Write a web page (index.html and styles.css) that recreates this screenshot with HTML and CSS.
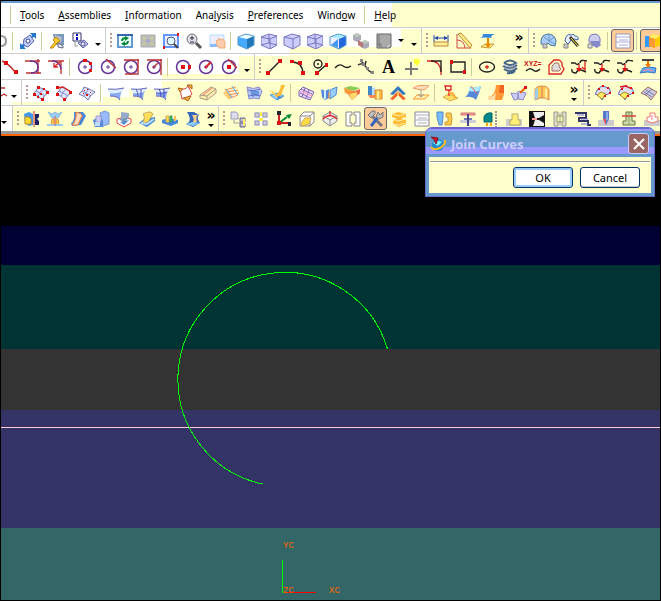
FILE: index.html
```html
<!DOCTYPE html>
<html lang="en">
<head>
<meta charset="utf-8">
<title>Join Curves</title>
<link rel="stylesheet" href="styles.css">
</head>
<body>
<svg class="defs" aria-hidden="true">
  <symbol id="ring" viewBox="0 0 16 16"><circle class="pu" cx="8" cy="8" r="6.500"/><path class="pu thin" d="M6 8h4M8 6v4"/></symbol>
  <symbol id="cube" viewBox="0 0 16 16"><path d="M0 4l8-3 8 2v9l-7 4-9-4z" fill="#ccf" stroke="#77b"/><path class="ln" stroke="#77b" d="M0 4l9 2 7-3M9 6v10M8 1v9M0 12l8-2 8 2"/></symbol>
  <symbol id="patch" viewBox="0 0 16 16"><path d="M0 9q4-3 5-7 4 1 11 5-5 3-7 8-3-4-9-6z" fill="#dde6ff" stroke="#77a"/><path class="ln" stroke="#88c" d="M3 6q5 2 9 5M10 4q-3 3-5 7"/></symbol>
  <symbol id="sheet" viewBox="0 0 16 16"><path d="M0 4q8 1 16-1-4 4-4 12-2-4-10-4 1-4-2-7z" fill="#8ae"/><path d="M0 4q8 1 16-1l-3 4q-5 2-11 1-1-3-2-4z" fill="#def"/><path class="ln" stroke="#66b" d="M0 4q8 1 16-1M2 11q8 0 10 4"/></symbol>
  <symbol id="splice" viewBox="0 0 16 16"><path class="bk" d="M0 4h4q3 3 4 0M16 2q-7-2-7 2M1 10q-1 4 4 4 2-4 5-3t5 2"/><path class="rd" d="M8 5v7"/><path class="dot" d="M5 9h6l-3 4z"/></symbol>
  <symbol id="star" viewBox="0 0 16 16"><path d="M0 9l3-5 4-3 7 2 2 5-6 2-3 5-2-4z" fill="#dde" stroke="#66b"/><path d="M2 10l4-3 5 2-4 5z" fill="#fe6" stroke="#a82"/><path class="dot" d="M7 0h2v2H7zM12 2h2v2h-2zM14 7h2v2h-2zM3 3h2v2H3zM9 10h2v2H9z"/></symbol>
</svg>
<div class="window">
  <header class="chrome">
    <nav class="menu" aria-label="Menu bar">
      <span class="rule"></span>
      <button><u>T</u>ools</button><button><u>A</u>ssemblies</button><button><u>I</u>nformation</button><button>Ana<u>l</u>ysis</button><button><u>P</u>references</button><button>Wind<u>o</u>w</button>
      <span class="rule"></span>
      <button><u>H</u>elp</button>
    </nav>

    <div class="row">
      <div class="bar">
        <button class="part" aria-label="Redo"><svg viewBox="0 0 9 16"><path d="M0 3q5 0 5 5t-5 5" fill="none" stroke="#999" stroke-width="2"/></svg></button>
        <i class="sep"></i>
        <button aria-label="Fit view"><svg viewBox="0 0 16 16"><path d="M4 6l6-4 4 6-6 6-5-2z" fill="#bcf" stroke="#66a"/><circle cx="8" cy="8" r="2" fill="#fff" stroke="#447"/><path d="M10 0h6v6l-2-2-2 1-1-1 1-2zM0 10l2 2 2-1 1 1-1 2 2 2H0z" fill="#27c"/></svg></button>
        <i class="sep"></i>
        <button aria-label="Selection filter"><svg viewBox="0 0 16 16"><path d="M4 1h11v11H6z" fill="#79b"/><path d="M6 2l7 2-1 6-6-2z" fill="#bbc"/><path d="M1 15l5-6-2-2 3-3 4 4-3 2-4 5z" fill="#fc3" stroke="#b80"/><path d="M9 10l5 3v2l-5-1z" fill="#eef" stroke="#668"/></svg></button>
        <button aria-label="Object information"><svg viewBox="0 0 16 16"><path d="M1 0h8v8H1z" fill="#fff" stroke="#336"/><path d="M4 1h2v2H4zM4 4h2v3H4z" fill="#00c"/><path d="M6 10l6-3 4 4-5 4z" fill="#bcf" stroke="#66a"/><circle cx="11" cy="11" r="2" fill="#eef" stroke="#558"/><path d="M3 9v4h3" class="ln" stroke="#999"/></svg></button>
        <button class="more" aria-label="Toolbar options"></button>
      </div>
      <div class="bar">
        <i class="grip"></i>
        <button aria-label="Refresh"><svg viewBox="0 0 16 16"><path d="M1 2h14v12H1z" fill="#eff" stroke="#69c" stroke-width="2"/><path d="M0 2h16" stroke="#36a" stroke-width="2"/><path d="M5 8q0-3 4-3M11 8q0 3-4 3" fill="none" stroke="#083" stroke-width="2"/><path d="M8 3l4 2-4 3zM8 8l-4 3 4 2z" fill="#083"/></svg></button>
        <button aria-label="Fit"><svg viewBox="0 0 16 16"><path d="M1 2h14v12H1z" fill="#bbb" stroke="#aaa"/><path d="M3 4l10 8M13 4L3 12" stroke="#cc9" stroke-width="2"/><path d="M6 6h4v4H6z" fill="#aac"/></svg></button>
        <button aria-label="Zoom to area"><svg viewBox="0 0 16 16"><path d="M1 2h14v12H1z" fill="#eef" stroke="#69f" stroke-width="2"/><circle cx="8" cy="8" r="4" fill="#dff" stroke="#557"/><path d="M11 11l4 4" stroke="#444" stroke-width="2"/><path class="dot" d="M14 0h2v3h-2zM0 13h2v3H0z"/></svg></button>
        <button aria-label="Zoom in and out"><svg viewBox="0 0 16 16"><circle cx="6" cy="6" r="5" fill="#dde" stroke="#777"/><path class="ln" stroke="#333" d="M4 5h4M6 3v4M4 9h4"/><path d="M10 10l5 5" stroke="#555" stroke-width="3"/></svg></button>
        <button aria-label="Pan"><svg viewBox="0 0 16 16"><path d="M1 2h14v11H1z" fill="#eef" stroke="#adf"/><path d="M1 11h9v3H1z" fill="#8bf"/><path d="M8 7h2V5l2 2 2-1 2 3v6h-6l-3-4z" fill="#fca" stroke="#ea7"/></svg></button>
        <i class="sep"></i>
        <button aria-label="Shaded"><svg viewBox="0 0 16 16"><path d="M0 4l8-3 8 2-7 3z" fill="#eff"/><path d="M0 4l9 2v10l-9-4z" fill="#4af"/><path d="M9 6l7-3v9l-7 4z" fill="#27b"/><path d="M0 4l8-3 8 2v9l-7 4-9-4z" class="ln" stroke="#59c"/></svg></button>
        <button aria-label="Wireframe"><svg><use href="#cube"/></svg></button>
        <button aria-label="Hidden edges"><svg viewBox="0 0 16 16"><path d="M0 4l8-3 8 2v9l-7 4-9-4z" fill="#ccf" stroke="#77b"/><path class="ln" stroke="#77b" d="M0 4l9 2 7-3M9 6v10"/></svg></button>
        <button aria-label="Dimmed edges"><svg><use href="#cube"/></svg></button>
        <button aria-label="Face analysis"><svg viewBox="0 0 16 16"><path d="M0 4l8-3 8 2-7 3z" fill="#aef"/><path d="M0 4l9 2v10l-9-4z" fill="#eef"/><path d="M9 6l7-3v9l-7 4z" fill="#26d"/><path d="M1 12l7-6v9z" fill="#49e"/><path d="M0 4l8-3 8 2v9l-7 4-9-4z" class="ln" stroke="#59c"/></svg></button>
        <button aria-label="Studio"><svg viewBox="0 0 16 16"><path d="M0 2l4-2 4 2v5L4 9 0 7zM8 9l4-2 4 2v5l-4 2-4-2z" fill="#aab"/><path d="M0 2l4 2 4-2-4-2zM8 9l4 2 4-2-4-2z" fill="#bcb"/><path d="M5 7l5 3v5l-5-3z" fill="#b77"/></svg></button>
        <button aria-label="Background"><svg viewBox="0 0 16 16"><path d="M1 1h14v13l-2 1H1z" fill="#aaa" stroke="#666"/><path d="M3 2v12M1 11h4v4" class="ln" stroke="#777"/><path d="M11 15q0-3 4-3z" fill="#ddd"/></svg></button>
        <button class="more up" aria-label="Background choices"></button><button class="more" aria-label="View toolbar options"></button>
      </div>
      <div class="bar">
        <i class="grip"></i>
        <button aria-label="Measure distance"><svg viewBox="0 0 16 16"><path d="M1 2v7M15 2v7M3 5h11" class="ln" stroke="#24a"/><path d="M1 5l4-2v4zM15 5l-4-2v4z" fill="#24a"/><path d="M1 9h14v4H1z" fill="#fe9" stroke="#b83"/></svg></button>
        <button aria-label="Measure angle"><svg viewBox="0 0 16 16"><path d="M1 1v14h14M1 7q7 0 8 8" class="ln" stroke="#c44"/><path d="M2 1l3-1 11 12-2 3z" fill="#fe8" stroke="#b83"/></svg></button>
        <button aria-label="Measure body"><svg viewBox="0 0 16 16"><path d="M0 5q4 0 4-4h12q-4 1-4 4-6-1-12 0z" fill="#38d"/><path d="M2 14l4-3h9l-4 4z" fill="#fe9" stroke="#c93"/><path d="M8 5h2v6h2l-3 4-3-4h2z" fill="#e80"/></svg></button>
        <i class="space"></i><button class="over" aria-label="More measure tools">»</button>
      </div>
      <div class="bar">
        <i class="grip"></i>
        <button aria-label="Section body"><svg viewBox="0 0 16 16"><path d="M1 9q0-8 8-8 6 1 7 7l-1 5-5-1-2-2-3 2-4-1z" fill="#acf" stroke="#479"/><path d="M9 2v6M4 4l5 4 5-4M9 8l6 3" class="ln" stroke="#69b"/><path d="M3 11h4v4H3z" fill="#ccc" stroke="#888"/></svg></button>
        <button aria-label="Sketch section"><svg viewBox="0 0 16 16"><path d="M2 8q1-8 6-6 2-2 4 1 4 0 3 4-4-2-7 0-1 2-3 4z" fill="#eef" stroke="#36a"/><path d="M7 4l8 9" stroke="#333" stroke-width="3"/><path d="M8 5l7 8" stroke="#fd3"/><path d="M1 11h4v4H1z" fill="#ccc" stroke="#888"/></svg></button>
        <button aria-label="Section shell"><svg viewBox="0 0 16 16"><path d="M3 9q-1-8 6-8 6 1 5 8l-2 4-4-3z" fill="#cce" stroke="#77b"/><path d="M5 8h8l2 4-4 3-6-3z" fill="#88c"/><path d="M2 11h4v4H2z" fill="#ddd" stroke="#888"/></svg></button>
        <i class="sep"></i>
        <button class="on" aria-label="Dialog list"><svg viewBox="0 0 16 16"><path d="M1 1h14v14H1z" fill="#fff" stroke="#99b"/><path d="M1 4h14M4 7h9M1 9h14M4 12h9" class="ln" stroke="#aad"/></svg></button>
        <i class="sep"></i>
        <button class="on" aria-label="Modeling"><svg viewBox="0 0 16 16"><path d="M1 3h6v11H1z" fill="#39f"/><path d="M5 4l4-3 7 2v9l-6 3-5-2z" fill="#fc0"/><path d="M5 4l6 2 5-3-7-2z" fill="#fe6"/><path d="M5 4l6 2v9l-6-2z" fill="#f93"/></svg></button>
      </div>
    </div>

    <div class="row">
      <div class="bar lead">
        <button aria-label="Line to arc"><svg viewBox="0 0 16 16"><path class="br" d="M0 2q7 3 13 11"/><path class="dot" d="M2 2h4v4H2zM12 11h4v4h-4z"/></svg></button>
        <button aria-label="Corner arc"><svg viewBox="0 0 16 16"><path class="br" d="M0 2h15M13 0v15M1 14h15"/><path class="pu" d="M5 2q8 0 8 6t-7 6"/></svg></button>
        <button aria-label="Trim corner"><svg viewBox="0 0 16 16"><path class="br" d="M0 2h16M13 2v13"/><path class="pu" d="M4 2q8 0 9 8"/><path class="rd" d="M12 3L6 8M6 4v4h4"/></svg></button>
        <i class="sep"></i>
        <button aria-label="Circle by three points"><svg><use href="#ring"/><path class="dot" d="M6 0h4v3H6zM12 3h3v3h-3zM12 10h3v3h-3z"/></svg></button>
        <button aria-label="Circle tangent"><svg><use href="#ring"/><path class="br" d="M6 0l10 9"/></svg></button>
        <button aria-label="Circle tangent to two lines"><svg><use href="#ring"/><path class="br" d="M1 1h15M15 0v16M2 15h12"/></svg></button>
        <button aria-label="Circle radius tangent"><svg><use href="#ring"/><path class="br" d="M1 1h15M15 0v16M7 9l5-5"/></svg></button>
        <i class="sep"></i>
        <button aria-label="Circle centre point"><svg><use href="#ring"/><path class="dot" d="M6 6h4v4H6zM13 6h3v4h-3z"/></svg></button>
        <button aria-label="Circle centre radius"><svg><use href="#ring"/><path class="rd wide" d="M7 9l6-6"/></svg></button>
        <button aria-label="Circle centre tangent"><svg><use href="#ring"/><path class="br" d="M7 0l9 9"/><path class="dot" d="M6 6h4v4H6z"/></svg></button>
        <button class="more" aria-label="Arc toolbar options"></button>
      </div>
      <div class="bar">
        <i class="grip"></i>
        <button aria-label="Line"><svg viewBox="0 0 16 16"><path class="bk" d="M2 14L14 2"/><path class="dot" d="M0 12h4v4H0zM12 0h4v4h-4z"/></svg></button>
        <button aria-label="Arc"><svg viewBox="0 0 16 16"><path class="bk" d="M3 3q10 0 11 11"/><path class="dot" d="M1 1h4v3H1zM9 2h4v4H9zM12 12h4v4h-4z"/></svg></button>
        <button aria-label="Lines and arcs"><svg viewBox="0 0 16 16"><circle class="bk" cx="6" cy="5" r="4"/><path class="bk" d="M5 14l9-8M5 5h2"/><path class="dot" d="M3 12h4v4H3zM13 4h3v4h-3z"/></svg></button>
        <button aria-label="Spline"><svg viewBox="0 0 16 16"><path class="bk" d="M0 9q4-5 8-2t8 0"/></svg></button>
        <button aria-label="Fit spline"><svg viewBox="0 0 16 16"><path class="bk" d="M0 6q5-3 8 2t7 6M3 2l3 3M8 2L7 6"/><path d="M4 4h3v3H4zM8 8h3v3H8zM13 12h3v3h-3zM2 0h3v3H2z" fill="#888"/></svg></button>
        <button class="letter" aria-label="Text">A</button>
        <button aria-label="Point"><svg viewBox="0 0 16 16"><path d="M7 3v13M1 10h13" stroke="#777" stroke-width="2"/><path d="M10 0h5l1 3-3 4-3-3z" fill="#ff3"/></svg></button>
        <button aria-label="Fillet curve"><svg viewBox="0 0 16 16"><path class="rd" d="M0 2h5q8 1 9 10v4"/><path class="bk" d="M4 2h10v11"/></svg></button>
        <button aria-label="Rectangle"><svg viewBox="0 0 16 16"><path class="bk" d="M1 3h14v10H1z"/><path class="dot" d="M0 1h3v4H0zM13 11h3v4h-3z"/></svg></button>
        <i class="sep"></i>
        <button aria-label="Ellipse"><svg viewBox="0 0 16 16"><ellipse class="bk" cx="8" cy="8" rx="7.500" ry="5"/><path class="rd" d="M6 8h4M8 6v4"/></svg></button>
        <button aria-label="Helix"><svg viewBox="0 0 16 16"><path class="ln wide" stroke="#468" d="M2 4q6-5 12 0-5 4-12 0M1 7q7 5 14-1M2 10q7 5 13-1M5 14q5 1 8-2"/><path class="ln" stroke="#aac" d="M2 6q6 4 12-1M3 9q5 3 11-1"/></svg></button>
        <button aria-label="Law curve"><svg viewBox="0 0 16 16"><text class="xyz" x="-1" y="7">XYZ=</text><path class="bk" d="M1 12q4-4 7-1t7-1"/></svg></button>
        <button aria-label="Offset curve"><svg viewBox="0 0 16 16"><path class="rd" d="M1 15V6l5-5h5q4 2 3 6l2 3-3 5z"/><path d="M4 12V7l3-3h3q2 2 1 4l2 2-2 2z" fill="#ddd" stroke="#a66"/></svg></button>
        <button aria-label="Bridge curve"><svg><use href="#splice"/><path class="rd" d="M14 2v9l-3-3"/></svg></button>
        <button aria-label="Simplify curve"><svg><use href="#splice"/></svg></button>
        <button aria-label="Join curve"><svg><use href="#splice"/></svg></button>
        <button aria-label="Project curve"><svg viewBox="0 0 16 16"><path d="M2 1h12" stroke="#444" stroke-width="2"/><path d="M0 14l3-5q6-2 13 0l-1 5q-8-2-15 0z" fill="#6af" stroke="#37b"/><path class="ln" stroke="#f88" d="M3 12q5-3 10 0"/><path d="M7 2h2v3h2L8 9 5 5h2z" fill="#e70"/></svg></button>
      </div>
    </div>

    <div class="row">
      <div class="bar">
        <button class="stub" aria-label="Curve"><svg viewBox="0 0 6 16"><path class="br" d="M0 3h4M0 11l3-2 3 2"/></svg></button>
        <button class="more" aria-label="Curve toolbar options"></button>
      </div>
      <div class="bar">
        <i class="grip"></i>
        <button aria-label="Through points"><svg><use href="#patch"/><path class="dot" d="M4 1h3v3H4zM0 8h3v3H0zM13 6h3v3h-3zM8 13h3v3H8zM7 8h2v2H7zM10 3h2v2h-2zM4 11h2v2H4z"/></svg></button>
        <button aria-label="From poles"><svg><use href="#patch"/><path class="rd" d="M1 3l6-1 8 5"/><path class="dot" d="M0 1h3v3H0zM0 8h3v3H0zM13 6h3v3h-3zM7 13h3v3H7z"/></svg></button>
        <button aria-label="From point cloud"><svg><use href="#patch"/><path class="dot" d="M5 5h1v1H5zM8 4h1v1H8zM11 7h1v1h-1zM7 9h2v2H7zM4 8h1v1H4z"/></svg></button>
        <i class="sep"></i>
        <button aria-label="Ruled"><svg><use href="#sheet"/></svg></button>
        <button aria-label="Through curves"><svg><use href="#sheet"/><path class="ln" stroke="#55b" d="M5 4q2 3 2 7M10 4v8"/></svg></button>
        <button aria-label="Curve mesh"><svg><use href="#sheet"/><path class="ln" stroke="#44b" d="M5 4q2 3 2 7M10 4v8M2 8q6 1 11-1"/></svg></button>
        <button aria-label="Swept"><svg viewBox="0 0 16 16"><path d="M3 4q6 1 8-3l4 8q-4 5-10 5z" fill="#fff" stroke="#d44"/><path d="M1 3l5 1-3 3zM10 0h5v4zM6 13l8-2-3 5z" fill="#fa3" stroke="#a62"/></svg></button>
        <button aria-label="Section surface"><svg viewBox="0 0 16 16"><path d="M0 10L11 2l5 2v4l-9 7-7-2z" fill="#fea" stroke="#a98"/><path d="M0 10l7 1 9-7M7 11v4" class="ln" stroke="#a98"/><path d="M3 10l9-7" stroke="#f66"/></svg></button>
        <button aria-label="Extension"><svg viewBox="0 0 16 16"><path d="M1 6l10-5 5 9-9 5z" fill="#fed"/><path d="M0 8l4-3 5 6-3 4z" fill="#fc7"/><path d="M2 5l11-3M4 7l11-2M5 10l11-2M7 13l8-3" stroke="#e94"/><path d="M3 4l6 9M9 1l6 9" stroke="#6ad"/></svg></button>
        <button aria-label="Offset surface"><svg viewBox="0 0 16 16"><path d="M1 2q7 3 12 0l3 4-3 8q-5-2-10 0z" fill="#bcf" stroke="#88c"/><path d="M4 6h9v4l-7 2z" fill="#69d"/><path class="ln" stroke="#66b" d="M2 5q6 2 12-1M3 11q6-3 11 0"/></svg></button>
        <button aria-label="Trimmed sheet"><svg viewBox="0 0 16 16"><path d="M1 10l8-2 6 3-7 4z" fill="#9cf" stroke="#59c"/><path d="M12 0h4l-4 10q-4 5-6 0 5-2 6-10z" fill="#fb3"/><path d="M0 5l6 2v4z" fill="#fd6"/><path d="M9 11l5 1-6 3z" fill="#48d"/></svg></button>
        <i class="sep"></i>
        <button aria-label="Quilt"><svg viewBox="0 0 16 16"><path d="M1 6l4-4 11 5-4 8L1 11z" fill="#edf" stroke="#76a"/><path class="ln" stroke="#86b" d="M2 8l10 5M3 4l11 5M7 3L4 12M11 5l-3 8"/><path d="M2 6l12 5" stroke="#f9a"/></svg></button>
        <button aria-label="Sew"><svg viewBox="0 0 16 16"><path d="M0 4l4 2 4-2v9l-4 2-3-3z" fill="#58d"/><path d="M9 5l7-3-1 8-6 4z" fill="#9cf" stroke="#58c"/><path d="M4 6v8" stroke="#cef" stroke-width="2"/><path d="M8 7v7" stroke="#f93"/></svg></button>
        <button aria-label="Patch"><svg viewBox="0 0 16 16"><path d="M0 3l6-2 10 2-6 3z" fill="#8c5"/><path d="M0 3l10 3v5L1 8z" fill="#f93"/><path d="M4 9l12-5v4l-8 7z" fill="#e64"/><path d="M5 9l8-2v3l-5 5z" fill="#fd6"/></svg></button>
        <button aria-label="Thicken sheet"><svg viewBox="0 0 16 16"><path d="M1 1h4v9H1z" fill="#48c"/><path d="M5 3l3-1v9H5z" fill="#bdf"/><path d="M8 5h7v9H8z" fill="#fb4" stroke="#c83"/><path d="M11 6v8" stroke="#fe9" stroke-width="2"/><path d="M1 10h7v3H3z" fill="#f85"/></svg></button>
        <button aria-label="Face blend"><svg viewBox="0 0 16 16"><path d="M0 9l8-8 8 8-3 1-5-5-5 5z" fill="#37b"/><path d="M0 14l8-8 8 8-3 1-5-5-5 5z" fill="#e62"/><path d="M7 7h2v4H7z" fill="#fb6"/></svg></button>
        <button aria-label="Styled blend"><svg viewBox="0 0 16 16"><path d="M0 3q6-4 16-2l-5 4q-5 0-11-2z" fill="#fdb" stroke="#e96"/><path d="M0 14l4-4h12l-4 4z" fill="#fea" stroke="#f93"/><path d="M8 5v7M5 9l3 3 3-3" stroke="#999" fill="none"/></svg></button>
        <i class="sep"></i>
        <button aria-label="Silhouette flange"><svg viewBox="0 0 16 16"><path d="M1 12l6-3 9 4-8 3z" fill="#fd6" stroke="#da4"/><path class="rd" d="M7 11V5M3 1h6v4H4z"/><path d="M7 8q5-1 6 5" stroke="#fa3" fill="none" stroke-width="2"/></svg></button>
        <button aria-label="Law extension"><svg viewBox="0 0 16 16"><path d="M4 2q5 2 12-1-1 5-5 14-4-4-11-3 5-3 4-10z" fill="#58d"/><path d="M4 2q5 2 12-1l-2 5q-5 1-10 0z" fill="#aef"/><path d="M6 1l6 8" stroke="#e66"/></svg></button>
        <button aria-label="Enlarge"><svg viewBox="0 0 16 16"><path d="M8 0h8v9l-2 6H0v-3q7 0 8-12z" fill="#f93"/><path d="M8 7q-2 5-8 5v3h7z" fill="#fda"/><path d="M12 0h4v8h-5z" fill="#e62"/></svg></button>
        <button aria-label="Reshape sheet"><svg viewBox="0 0 16 16"><path d="M0 8q5 2 8-2l7 2-3 7q-5-2-9 0z" fill="#ccf" stroke="#88c"/><path d="M7 8v6" stroke="#66a"/><path d="M9 8l5-5" stroke="#e60" stroke-width="2"/><path class="dot" d="M13 1h3v3h-3z"/></svg></button>
        <button aria-label="Flattening"><svg viewBox="0 0 16 16"><path d="M1 5q1-4 7-4t7 4v10l-4-2H6l-5 2z" fill="#fc5" stroke="#d85"/><path d="M8 2v11" stroke="#d75"/><path d="M1 5l3-2v10l-3 2z" fill="#9ce"/><path d="M12 4v9" stroke="#fea" stroke-width="2"/></svg></button>
        <i class="space"></i><button class="over" aria-label="More surface tools">»</button>
      </div>
      <div class="bar">
        <i class="grip"></i>
        <button aria-label="Edit surface poles"><svg><use href="#star"/></svg></button>
        <button aria-label="Move defining point"><svg><use href="#star"/><path class="rd" d="M2 2l5-1 7 3"/></svg></button>
        <button aria-label="Surface degree"><svg viewBox="0 0 16 16"><path d="M0 8l7-6 9 5-6 8q-3-5-10-7z" fill="#ccd" stroke="#a66"/><path d="M3 7l8 5M5 5l8 5M4 10l7-6" class="ln" stroke="#77a"/></svg></button>
      </div>
    </div>

    <div class="row">
      <div class="bar">
        <button class="more first" aria-label="Edit toolbar options"></button>
      </div>
      <div class="bar">
        <i class="grip"></i>
        <button aria-label="Mirror feature"><svg viewBox="0 0 16 16"><path d="M0 3l5-2 4 2v11l-4 1-4-3z" fill="#49e"/><path d="M1 6h4l2 2v5H1z" fill="#fd3" stroke="#b82"/><path d="M10 0v16" stroke="#c33"/><path d="M11 3h4v3l-2 2 2 2v4h-4z" fill="#226"/></svg></button>
        <button aria-label="Mirror body"><svg viewBox="0 0 16 16"><path d="M1 1l4 2 3-2 3 2 4-2-4 6H5z" fill="#9cf" stroke="#8bd"/><path d="M4 14l1-6h2v6zM9 14V8h2l1 6z" fill="#fc4" stroke="#d94"/><path d="M0 14h16" stroke="#9ce" stroke-width="2"/><path d="M8 5v10" stroke="#d55"/></svg></button>
        <button aria-label="Edge blend"><svg viewBox="0 0 16 16"><path d="M4 1h9l3 4-5 9-9 1-1-3q4-2 3-11z" fill="#48d"/><path d="M6 1q7 2 6 4-2 4-4 9l-6 0q5-5 4-13z" fill="#fdb" stroke="#e73"/></svg></button>
        <button aria-label="Pad"><svg viewBox="0 0 16 16"><path d="M7 2l5-2 4 2v11l-6 2z" fill="#9bf" stroke="#79c"/><path d="M0 9l4-2 6 2v7H2z" fill="#58d"/><path d="M3 5h5v6H3z" fill="#ccf" stroke="#99c"/><path d="M2 11h5v4H2z" fill="#bdf"/></svg></button>
        <button aria-label="Trim body"><svg viewBox="0 0 16 16"><path d="M1 8l8-2 6 2v4l-7 4-7-4z" fill="#fff" stroke="#e44"/><path d="M3 8q7-1 7-6l3 1q0 6-6 8z" fill="#79a"/><path d="M5 1l8 1-2 5-6 1z" fill="#9ac"/><path d="M4 11l9-2-5 5z" fill="#58c"/></svg></button>
        <button aria-label="Offset face"><svg viewBox="0 0 16 16"><path d="M0 12l5-4 11-2v4l-8 6z" fill="#48d"/><path d="M4 3q7-4 10 0l-5 8-6 1q4-5 1-9z" fill="#fd5" stroke="#ba6"/><path d="M2 12l6 1 7-5" stroke="#bdf" fill="none" stroke-width="2"/></svg></button>
        <button aria-label="Scale body"><svg viewBox="0 0 16 16"><path d="M0 9l6-2 10 2v3l-7 3-9-3z" fill="#48d"/><path d="M4 5h3v6H4z" fill="#fd5" stroke="#ca5"/><path d="M8 5h2v6H8z" fill="#4b6" stroke="#396"/><path d="M12 5h2v5h-2z" fill="#fb5"/></svg></button>
        <button aria-label="Draft"><svg viewBox="0 0 16 16"><path d="M2 1h7l5 3q-3 3 1 8l-7 4-7-3q7-3 1-12z" fill="#36b"/><path d="M7 4q4 5-1 9l6-2q-2-5 1-7z" fill="#fc8"/><path d="M1 13l6-2 8 1-7 3z" fill="#8cf"/></svg></button>
        <button class="over tight" aria-label="More feature tools">»</button>
      </div>
      <div class="bar">
        <i class="grip"></i>
        <button aria-label="Assembly components"><svg viewBox="0 0 16 16"><path d="M1 1h5l2 2v5H1z" fill="#dde" stroke="#99b"/><path d="M4 9v3h6" class="ln" stroke="#999"/><path d="M10 7h5v4h-5zM10 12h5v4h-5z" fill="#bbd" stroke="#668"/><path d="M13 8h2v7h-2z" fill="#fe6"/></svg></button>
        <button aria-label="Component array"><svg viewBox="0 0 16 16"><path d="M1 1h14v14H1z" fill="#dde"/><path d="M2 2h4v4H2zM10 2h4v4h-4zM2 10h4v4H2zM10 10h4v4h-4z" fill="#ccd" stroke="#99a"/><path d="M8 0v16M0 8h16" stroke="#fff" stroke-width="2"/><path d="M6 7h4v3H6zM7 1h2v4H7z" fill="#fe4"/></svg></button>
        <button aria-label="Orient WCS"><svg viewBox="0 0 16 16"><path d="M3 3v9h9" stroke="#c22" stroke-width="2" fill="none"/><path d="M3 12l8-6" stroke="#083" stroke-width="2"/><path d="M1 0h4v4H1zM12 11h3v4h-3z" fill="#223"/><path d="M10 4l6-1-3 5z" fill="#083"/><path class="dot" d="M1 10h4v4H1z"/></svg></button>
        <button aria-label="Explode view"><svg viewBox="0 0 16 16"><path d="M1 5l4-4h10v10l-4 4H1z" fill="#fff" stroke="#888"/><path d="M1 5h10v10M11 5l4-4" class="ln" stroke="#888"/><path d="M2 12l4-5h6l-2 6-7 2z" fill="#fd4" stroke="#da5"/></svg></button>
        <button aria-label="Sequence"><svg viewBox="0 0 16 16"><path d="M1 5l7-4 7 4v5l-7 5-7-5z" fill="#eee" stroke="#888"/><path d="M1 5l7 4 7-4M8 9v6" class="ln" stroke="#888"/><path class="rd" d="M1 8q7-7 14 0M8 0v4"/></svg></button>
        <button aria-label="Clearance"><svg viewBox="0 0 16 16"><path d="M1 1h6v3H5v8h2v3H1zM9 1h6v14H9v-3h2V4H9z" fill="#fff" stroke="#888"/></svg></button>
        <button class="on" aria-label="Tools"><svg viewBox="0 0 16 16"><path d="M4 5l10 10" stroke="#778" stroke-width="3"/><path d="M11 5L3 15" stroke="#36b" stroke-width="3"/><path d="M0 4l4-4h3v3L3 7zM10 1l2 3 3-3v5l-4 2-3-2z" fill="#bbb" stroke="#777"/></svg></button>
        <button aria-label="Springs"><svg viewBox="0 0 16 16"><path d="M1 3l6-2 8 2v3l-5 1 5 2v4l-7 3-6-3v-3l4-2-5-2z" fill="#fb3"/><path d="M1 3l7 2 6-2M1 8l7 2 6-2M2 13l6 1 6-2" stroke="#fea" fill="none"/></svg></button>
        <button aria-label="Part list"><svg viewBox="0 0 16 16"><path d="M1 1h14v14H1z" fill="#fff" stroke="#889"/><path d="M1 4h14M4 7h9M1 9h14M4 12h9" class="ln" stroke="#aab"/></svg></button>
        <button aria-label="Standard parts"><svg viewBox="0 0 16 16"><path d="M0 1h6v5l-1 8H2L0 6z" fill="#7bf" stroke="#58c"/><path d="M9 2h5q2 6 0 12H8v-3h3V6H9z" fill="#fc4" stroke="#c94"/></svg></button>
        <button aria-label="Ejector"><svg viewBox="0 0 16 16"><path d="M1 2h14v2H1z" fill="#f99" stroke="#c77"/><path d="M0 9h16v3H0z" fill="#ccd"/><path d="M4 7h8v2H4z" fill="#77b"/><path d="M7 3h2v12H7z" fill="#448"/></svg></button>
        <button aria-label="Slider"><svg viewBox="0 0 16 16"><path d="M1 6q2-5 8-4v9H1z" fill="#088" stroke="#066"/><path d="M3 12h2v3H3zM7 12h2v3H7z" fill="#fa0"/><path d="M13 0v16" stroke="#999" stroke-width="2" stroke-dasharray="2 1"/></svg></button>
        <button aria-label="Sub insert"><svg viewBox="0 0 16 16"><path d="M0 8h16v7H0z" fill="#ccc"/><path d="M6 3h6v6h2v5H4V9h2z" fill="#fe7" stroke="#ba6"/></svg></button>
        <button aria-label="Gate"><svg viewBox="0 0 16 16"><path d="M0 0h16v16H0z" fill="#111"/><path d="M4 1h11v3l-5 3H6zM4 15h11v-3l-5-3H6z" fill="#eee"/><path d="M8 7h7v2H8z" fill="#111"/><path d="M3 7h5v2H3z" fill="#f99"/></svg></button>
        <button aria-label="Runner"><svg viewBox="0 0 16 16"><path d="M2 1h4v14H2zM10 1h4v14h-4z" fill="#ddc" stroke="#998"/><path d="M5 5h6v6H5z" fill="#ffb" stroke="#996"/><path d="M8 2v12" class="ln" stroke="#999"/></svg></button>
        <button aria-label="Cooling"><svg viewBox="0 0 16 16"><path d="M0 2h11v5H4v3h9v4h3" fill="none" stroke="#336" stroke-width="2"/><path d="M2 4h7M6 8h7M6 13h7" class="ln" stroke="#77d"/></svg></button>
        <button aria-label="Electrode"><svg viewBox="0 0 16 16"><path d="M0 9h16v6H0z" fill="#ccc"/><path d="M5 0h6v8l-3 6-3-6z" fill="#57c"/><path d="M8 14L5 8h3z" fill="#e55"/><path d="M9 1v8" stroke="#bdf"/></svg></button>
        <button aria-label="Trim mold"><svg viewBox="0 0 16 16"><path d="M5 1h6v9h3v4H2v-4h3z" fill="#cda" stroke="#674"/><path class="rd" d="M1 5h14"/><path d="M8 1v12" class="ln" stroke="#896"/></svg></button>
        <button aria-label="Pocket"><svg viewBox="0 0 16 16"><path d="M0 9h16v6H0z" fill="#ccc"/><path d="M3 10V6h3V2h5v4h3v4l-6 2z" fill="#fff" stroke="#e77"/><path d="M8 4v5" stroke="#f77"/></svg></button>
      </div>
    </div>
  </header>

  <main class="stage" aria-label="Graphics window">
    <div class="band black"></div><div class="band navy"></div><div class="band teal"></div><div class="band grey"></div><div class="band indigo"></div><div class="band sea"></div>
    <svg class="drawing" aria-label="Arc and coordinate axes">
      <path class="horizon" d="M0 291.500h4000"/>
      <path class="arc" d="M386.500 213A107 107 0 1 0 261.500 348"/>
      <rect class="yaxis" x="281" y="424" width="1" height="33"/>
      <rect class="xaxis" x="283" y="456" width="32" height="1"/>
      <text x="282" y="412">YC</text>
      <text x="282" y="457">ZC</text>
      <text x="328" y="457">XC</text>
    </svg>
  </main>

  <section class="dialog" role="dialog" aria-labelledby="dialog-title">
    <div class="titlebar">
      <svg class="logo" viewBox="0 0 16 16"><circle cx="8" cy="9" r="6" fill="#28c"/><path d="M3 7q4-4 9-1l-4 4z" fill="#7ef"/><path d="M1 1l7 1-2 6q-1-5-5-7z" fill="#d12" stroke="#812"/><path d="M1 11q3 4 9 1 6-4 5-8" fill="none" stroke="#fb2" stroke-width="2"/></svg>
      <h1 id="dialog-title">Join Curves</h1>
      <button class="close" aria-label="Close"><svg viewBox="0 0 14 14"><path d="M2 2l10 10M12 2L2 12" stroke="#fff" stroke-width="2"/></svg></button>
    </div>
    <div class="body">
      <hr>
      <div class="actions"><button class="default">OK</button><button>Cancel</button></div>
    </div>
  </section>
</div>
</body>
</html>
```
FILE: styles.css
```css
* { box-sizing: border-box; }

body {
  margin: 0;
  background: #000;
  font: 11px/14px "Noto Sans", "Liberation Sans", sans-serif;
  color: #000;
}

button {
  font: inherit;
  color: inherit;
  border: 0;
  padding: 0;
  margin: 0;
  background: none;
}

.defs { position: absolute; width: 0; height: 0; }

.window {
  position: relative;
  display: flex;
  flex-direction: column;
  min-height: 100vh;
  border: 1px solid #000;
  overflow: hidden;
}

/* Menu and toolbars */
.chrome {
  border-top: 2px solid #69c;
  border-bottom: 2px solid #f60;
  background:
    linear-gradient(#fff, #fff) 0 0 / 391px 25px no-repeat,
    linear-gradient(#fff, #fff) 0 25px / 400px 19px no-repeat,
    linear-gradient(#fff, #fff) 0 44px / 289px 9px no-repeat,
    linear-gradient(#fff, #fff) 0 53px / 238px 18px no-repeat,
    linear-gradient(#fff, #fff) 0 71px / 161px 15px no-repeat,
    linear-gradient(#fff, #fff) 0 86px / 128px 8px no-repeat,
    linear-gradient(#fff, #fff) 0 94px / 102px 5px no-repeat,
    linear-gradient(#fff, #fff) 0 99px / 11px 30px no-repeat,
    #ffc;
}

.menu {
  display: flex;
  align-items: center;
  height: 25px;
  padding-left: 9px;
  border-bottom: 1px solid #ccc;
  font-size: 10px;
}
.menu button { padding: 0 7px; white-space: nowrap; }
.menu button:first-of-type { padding-left: 9px; }
.menu .rule { width: 1px; height: 18px; background: #cc9; }
.menu .rule ~ .rule { margin: 0 2px; }
.menu u { text-decoration: underline; text-underline-offset: 1px; }

.row {
  display: flex;
  height: 26px;
  border-bottom: 1px solid #ccc;
  box-shadow: inset 0 1px #fff;
}
.row:last-child { border-bottom: 3px solid #999; height: 28px; }

.bar {
  display: flex;
  flex: none;
  align-items: center;
  border-right: 1px solid #ccc;
}
.bar:last-child { border-right: 0; }
.bar.lead { margin-left: -3px; }

.bar button {
  display: flex;
  flex: none;
  align-items: center;
  justify-content: center;
  width: 23px;
  height: 23px;
}
.bar svg { flex: none; width: 16px; height: 16px; overflow: visible; }
.bar button.part { width: 9px; justify-content: flex-start; }
.bar button.part svg { width: 9px; }
.bar button.stub { width: 6px; }
.bar button.stub svg { width: 6px; }
.bar button.on { border: 1px solid #666; border-radius: 3px; background: #fc9; }

.sep { flex: none; width: 1px; height: 18px; margin: 0 3px 0 2px; background: #cc9; }
.space { flex: none; width: 12px; }
.grip {
  flex: none;
  width: 2px;
  height: 16px;
  margin: 0 1px 0 4px;
  background: repeating-linear-gradient(#b99 0 2px, transparent 2px 4px);
}

.bar button.more { width: 14px; padding-top: 8px; }
.bar button.more.up { width: 12px; padding-top: 0; }
.bar button.more.first { width: 11px; justify-content: flex-start; }
.more::after, .over::after {
  content: "";
  border: 3px solid transparent;
  border-top-color: #000;
  border-bottom: 0;
}
.bar button.over {
  flex-direction: column;
  gap: 5px;
  width: 18px;
  font: bold 14px/8px "DejaVu Sans", sans-serif;
}
.bar button.over.tight { width: 14px; }
.bar button.letter { font: bold 18px/20px "Liberation Serif", serif; }

/* Icon strokes */
.pu, .rd, .br, .bk, .ln { fill: none; }
.pu { stroke: #639; stroke-width: 1.5; }
.rd { stroke: #d22; stroke-width: 1.3; }
.br { stroke: #b33; stroke-width: 1.4; }
.bk { stroke: #222; stroke-width: 1.4; }
.thin { stroke-width: 1; }
.wide { stroke-width: 2; }
.dot { fill: #d11; }
.xyz { font: bold 7px "Liberation Sans", sans-serif; fill: #c11; }

/* Graphics window */
.stage {
  position: relative;
  display: flex;
  flex: 1;
  flex-direction: column;
  min-height: 464px;
}
.band.black { flex: 90; background: #000; }
.band.navy { flex: 39; background: #003; }
.band.teal { flex: 84; background: #033; }
.band.grey { flex: 61; background: #333; }
.band.indigo { flex: 118; background: #336; }
.band.sea { flex: 72; background: #366; }

.drawing {
  position: absolute;
  inset: 0;
  width: 100%;
  height: 100%;
  shape-rendering: crispEdges;
}
.horizon { stroke: #fcd; }
.arc { stroke: #0f0; fill: none; }
.yaxis { fill: #0f0; }
.xaxis { fill: #f00; }
.drawing text { font: 9px "Liberation Mono", monospace; fill: #f60; }

/* Dialog */
.dialog {
  position: absolute;
  top: 126px;
  right: 5px;
  width: 230px;
  padding: 0 3px 3px;
  border: 1px solid #66c;
  border-radius: 7px 7px 0 0;
  background: #69c;
}
.titlebar {
  display: flex;
  align-items: center;
  height: 29px;
  margin: 0 -3px;
  padding: 2px 5px 0 4px;
  border-radius: 6px 6px 0 0;
  background: linear-gradient(#66c 0 1px, #99f 1px 3px, #69c 3px 19px, #99f 19px 26px, #69c 26px);
}
.logo { width: 16px; height: 16px; }
.titlebar h1 {
  flex: 1;
  margin: 0 0 0 5px;
  font: bold 13px/16px "Open Sans", sans-serif;
  color: #ccf;
}
.close {
  display: flex;
  align-items: center;
  justify-content: center;
  width: 21px;
  height: 21px;
  border: 1px solid #ccf;
  border-radius: 3px;
  background: #966;
}
.close svg { width: 14px; height: 14px; }

.body { padding: 4px 1px 5px; background: #ffc; }
.body hr { height: 2px; margin: 0 0 4px; border: 0; border-top: 1px solid #999; background: #fff; }
.actions { display: flex; justify-content: flex-end; gap: 7px; padding-right: 10px; }
.actions button {
  width: 60px;
  height: 21px;
  border: 1px solid #036;
  border-radius: 3px;
  background: #fff;
  box-shadow: inset 0 -1px #ccc;
}
.actions .default { box-shadow: inset 0 0 0 2px #9cf; }
```
